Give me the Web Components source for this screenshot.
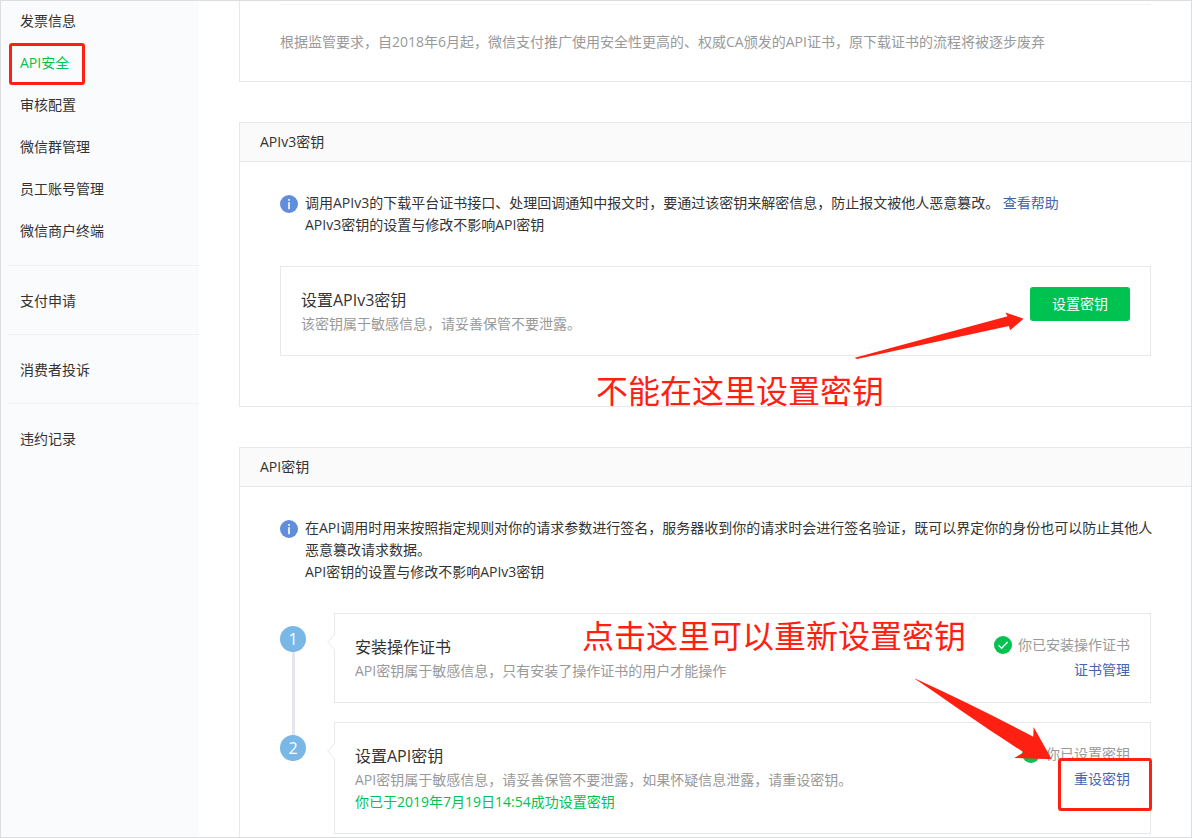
<!DOCTYPE html>
<html lang="zh-CN">
<head>
<meta charset="utf-8">
<meta name="viewport" content="width=device-width, initial-scale=1">
<title>API安全</title>
<style>
  body {
    margin: 0;
    background: #fff;
    color: #333;
    font: 14px/22px "Open Sans", "Noto Sans CJK SC", sans-serif;
    --green: #00c250;
    --link: #4466af;
    --muted: #999;
    --line: #e7e8eb;
    --mark: #ff2012;
  }
</style>
</head>
<body>
<app-shell>
  <side-nav slot="nav">
    <nav-group>
      <nav-item>发票信息</nav-item>
      <nav-item current marked>API安全</nav-item>
      <nav-item>审核配置</nav-item>
      <nav-item>微信群管理</nav-item>
      <nav-item>员工账号管理</nav-item>
      <nav-item>微信商户终端</nav-item>
    </nav-group>
    <nav-group><nav-item>支付申请</nav-item></nav-group>
    <nav-group><nav-item>消费者投诉</nav-item></nav-group>
    <nav-group><nav-item>违约记录</nav-item></nav-group>
  </side-nav>

  <cert-notice>根据监管要求，自2018年6月起，微信支付推广使用安全性更高的、权威CA颁发的API证书，原下载证书的流程将被逐步废弃</cert-notice>

  <key-panel>
    <span slot="title">APIv3密钥</span>
    <info-tip>
      <p-line>调用APIv3的下载平台证书接口、处理回调通知中报文时，要通过该密钥来解密信息，防止报文被他人恶意篡改。 <text-link>查看帮助</text-link></p-line>
      <p-line>APIv3密钥的设置与修改不影响API密钥</p-line>
    </info-tip>
    <key-card>
      <span slot="title">设置APIv3密钥</span>
      <span slot="desc">该密钥属于敏感信息，请妥善保管不要泄露。</span>
      <primary-button slot="action">设置密钥</primary-button>
      <note-text slot="note" style="right:266px;top:104px">不能在这里设置密钥</note-text>
      <note-arrow slot="note" shape="short" style="right:126px;top:44px"></note-arrow>
    </key-card>
  </key-panel>

  <key-panel last>
    <span slot="title">API密钥</span>
    <info-tip>
      <p-line>在API调用时用来按照指定规则对你的请求参数进行签名，服务器收到你的请求时会进行签名验证，既可以界定你的身份也可以防止其他人恶意篡改请求数据。</p-line>
      <p-line>API密钥的设置与修改不影响APIv3密钥</p-line>
    </info-tip>
    <step-list>
      <step-item number="1">
        <key-card pointer>
          <span slot="title">安装操作证书</span>
          <span slot="desc">API密钥属于敏感信息，只有安装了操作证书的用户才能操作</span>
          <done-status slot="action">你已安装操作证书</done-status>
          <text-link slot="action">证书管理</text-link>
          <note-text slot="note" style="right:184px;top:2px">点击这里可以重新设置密钥</note-text>
        </key-card>
      </step-item>
      <step-item number="2" final>
        <key-card pointer>
          <span slot="title">设置API密钥</span>
          <span slot="desc">API密钥属于敏感信息，请妥善保管不要泄露，如果怀疑信息泄露，请重设密钥。</span>
          <span slot="result">你已于2019年7月19日14:54成功设置密钥</span>
          <done-status slot="action">你已设置密钥</done-status>
          <text-link slot="action">重设密钥</text-link>
          <note-arrow slot="note" shape="long" style="right:98px;top:-45px"></note-arrow>
          <note-frame slot="note" style="right:-2px;top:35px;width:94px;height:53px"></note-frame>
        </key-card>
      </step-item>
    </step-list>
  </key-panel>
</app-shell>

<script>
  const define = (name, render) => customElements.define(name, class extends HTMLElement {
    connectedCallback() {
      if (this.shadowRoot) return;
      this.attachShadow({ mode: 'open' }).innerHTML = render(this);
    }
  });

  define('app-shell', () => `
    <style>
      :host { display: flex; min-height: 100vh; position: relative; overflow: hidden; }
      main { flex: 1; min-width: 0; margin-left: 40px; display: flex; flex-direction: column; gap: 40px; }
      .frame { position: absolute; inset: 0; border: 1px solid #dcdddf; pointer-events: none; }
    </style>
    <slot name="nav"></slot>
    <main><slot></slot></main>
    <div class="frame"></div>`);

  define('side-nav', () => `
    <style>
      :host { display: block; flex: none; width: 199px; background: #fafbfd; }
    </style>
    <nav aria-label="账户设置"><slot></slot></nav>`);

  define('nav-group', () => `
    <style>
      :host { display: block; margin-left: 8px; padding: 14px 0 12px; border-top: 1px solid #f0f1f3; }
      :host(:first-child) { padding: 0 0 13px; border-top: 0; }
    </style>
    <slot></slot>`);

  define('nav-item', el => `
    <style>
      :host { display: block; position: relative; }
      a { display: block; padding-left: 12px; line-height: 42px; color: inherit; text-decoration: none; }
      :host([current]) a { color: var(--green); }
      note-frame { left: 1px; top: 1px; width: 76px; height: 42px; }
    </style>
    <a href="#"${el.hasAttribute('current') ? ' aria-current="page"' : ''}><slot></slot></a>
    ${el.hasAttribute('marked') ? '<note-frame></note-frame>' : ''}`);

  define('cert-notice', () => `
    <style>
      :host { display: block; padding: 4px 41px 0 40px; border: solid var(--line); border-width: 0 0 1px 1px; color: var(--muted); }
      p { margin: 0; padding: 26px 0 28px; border-top: 1px solid #f2f3f6; }
    </style>
    <p><slot></slot></p>`);

  define('key-panel', () => `
    <style>
      :host { display: block; border: 1px solid var(--line); border-right: 0; }
      :host([last]) { flex: 1; border-bottom: 0; }
      h2 { margin: 0; padding-left: 20px; font-size: 14px; font-weight: 400; line-height: 38px; background: #fafafa; border-bottom: 1px solid var(--line); }
      .body { display: flex; flex-direction: column; gap: 30px; padding: 30px 41px 50px 40px; }
      :host([last]) .body { padding-bottom: 0; }
    </style>
    <h2><slot name="title"></slot></h2>
    <div class="body"><slot></slot></div>`);

  define('info-tip', () => `
    <style>
      :host { display: flex; gap: 7px; margin-right: -4px; }
      svg { flex: none; width: 18px; height: 18px; margin-top: 3px; }
    </style>
    <svg viewBox="0 0 18 18" aria-hidden="true">
      <circle cx="9" cy="9" r="9" fill="#618ddd"/>
      <rect x="8.2" y="4" width="1.6" height="1.8" fill="#fff"/>
      <rect x="8.2" y="7.2" width="1.6" height="7" fill="#fff"/>
    </svg>
    <div><slot></slot></div>`);

  define('p-line', () => `
    <style>:host { display: block; } p { margin: 0; }</style>
    <p><slot></slot></p>`);

  define('text-link', () => `
    <style>a { color: var(--link); text-decoration: none; }</style>
    <a href="#"><slot></slot></a>`);

  define('primary-button', () => `
    <style>
      button { display: block; height: 34px; padding: 0 22px; border: 0; border-radius: 3px; background: var(--green); color: #fff; font: inherit; cursor: pointer; }
    </style>
    <button type="button"><slot></slot></button>`);

  define('done-status', () => `
    <style>
      :host { display: flex; align-items: center; gap: 6px; color: var(--muted); }
      svg { width: 18px; height: 18px; }
    </style>
    <svg viewBox="0 0 18 18" aria-hidden="true">
      <circle cx="9" cy="9" r="9" fill="#00c250"/>
      <path d="M4.6 9.2l3 3 6-6.2" fill="none" stroke="#fff" stroke-width="1.4"/>
    </svg>
    <slot></slot>`);

  define('key-card', () => `
    <style>
      :host { display: flex; justify-content: space-between; position: relative; padding: 20px; border: 1px solid var(--line); }
      h3 { margin: 0; font-size: 16px; font-weight: 400; line-height: 26px; }
      p { margin: 0; color: var(--muted); }
      .result { color: var(--green); }
      .side { flex: none; display: flex; flex-direction: column; align-items: flex-end; gap: 3px; }
      .tip { display: none; position: absolute; left: -8px; top: 20px; width: 8px; height: 16px; }
      :host([pointer]) .tip { display: block; }
    </style>
    <svg class="tip" viewBox="0 0 8 16" aria-hidden="true">
      <path d="M8 0L.7 8 8 16z" fill="#fff"/>
      <path d="M7.5 .5L.7 8l6.800 7.500" fill="none" stroke="#e7e8eb"/>
    </svg>
    <div>
      <h3><slot name="title"></slot></h3>
      <p><slot name="desc"></slot></p>
      <p class="result"><slot name="result"></slot></p>
    </div>
    <div class="side"><slot name="action"></slot></div>
    <slot name="note"></slot>`);

  define('step-list', () => `
    <style>:host { display: block; }</style>
    <slot></slot>`);

  define('step-item', el => `
    <style>
      :host { display: grid; grid-template-columns: 26px 1fr; column-gap: 28px; }
      .rail { display: flex; flex-direction: column; align-items: center; position: relative; padding-top: 13px; }
      .dot { position: relative; width: 26px; height: 26px; border-radius: 50%; background: #78b7e6; color: #fff; font-size: 16px; line-height: 26px; text-align: center; }
      .bar { position: absolute; top: 26px; bottom: -26px; width: 3px; background: #e5e6ec; }
      .content { padding-bottom: 19px; }
      :host([final]) .content { padding-bottom: 0; }
      :host([final]) .bar { display: none; }
      :host([final]) { position: relative; }
    </style>
    <div class="rail"><div class="bar"></div><div class="dot">${el.getAttribute('number')}</div></div>
    <div class="content"><slot></slot></div>`);

  define('note-text', () => `
    <style>
      :host { position: absolute; color: var(--mark); font-size: 32px; line-height: 40px; white-space: nowrap; }
    </style>
    <slot></slot>`);

  define('note-frame', () => `
    <style>
      :host { position: absolute; box-sizing: border-box; border: 3px solid var(--mark); border-radius: 3px; pointer-events: none; }
    </style>`);

  const arrows = {
    short: [170, 48, 'M.8 46.800L153.500 5.300 151.500 1.500 169.500 7.700 156 19.300 155 15 3 48z'],
    long: [138, 82, 'M.7 .8L1.500 .700C40 18 80 38 119.300 58.700L119.600 49 137.700 81.300 100.300 80 109.700 74.300C70 49 35 24 .7 .8z']
  };
  define('note-arrow', el => {
    const [w, h, d] = arrows[el.getAttribute('shape')];
    return `
    <style>:host { position: absolute; pointer-events: none; } svg { display: block; }</style>
    <svg width="${w}" height="${h}" viewBox="0 0 ${w} ${h}" aria-hidden="true"><path d="${d}" fill="#ff2012"/></svg>`;
  });
</script>
</body>
</html>
